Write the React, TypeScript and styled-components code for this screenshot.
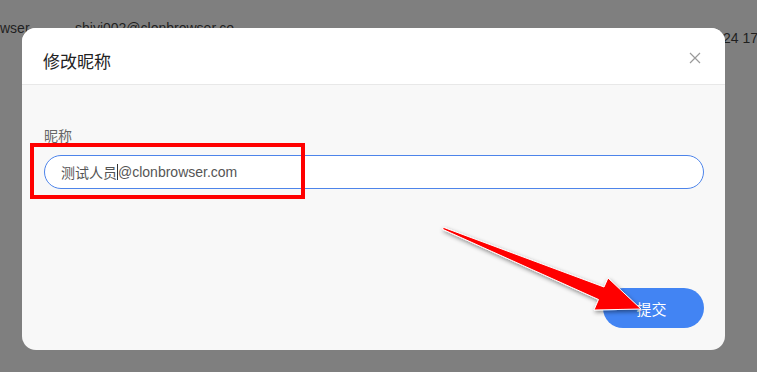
import React from "react";
import styled, { createGlobalStyle } from "styled-components";

const Global = createGlobalStyle`
  html, body { margin: 0; padding: 0; }
  body {
    width: 757px;
    height: 372px;
    overflow: hidden;
    font-family: "Liberation Sans", "Noto Sans CJK SC", sans-serif;
  }
`;

const Page = styled.div`
  position: relative;
  width: 757px;
  height: 372px;
  background: #7f7f7f;
  overflow: hidden;
`;

const TableRow = styled.div`
  display: flex;
  align-items: flex-start;
  padding-top: 20px;
  font-size: 14px;
  line-height: 16px;
  color: #1f1f1f;
`;

const Cell = styled.span<{ $w: number; $drop?: number }>`
  width: ${(p) => p.$w}px;
  flex: none;
  white-space: nowrap;
  margin-top: ${(p) => p.$drop ?? 0}px;
`;

const Modal = styled.div`
  position: absolute;
  left: 22px;
  top: 28px;
  width: 703px;
  height: 322px;
  border-radius: 14px;
  overflow: hidden;
  background: #f8f8f8;
  display: flex;
  flex-direction: column;
`;

const Header = styled.div`
  height: 57px;
  flex: none;
  background: #fff;
  border-bottom: 1px solid #e8e8e8;
  display: flex;
  align-items: center;
  justify-content: space-between;
  padding: 6px 24px 0 21px;
  box-sizing: border-box;
`;

const Title = styled.div`
  font-size: 17px;
  color: #222;
  padding-top: 2px;
`;

const Close = styled.div`
  width: 12px;
  height: 12px;
  display: flex;
  align-items: center;
  justify-content: center;
  margin-top: -2px;
`;

const Body = styled.div`
  flex: 1;
  padding: 43px 21px 22px 22px;
  display: flex;
  flex-direction: column;
`;

const Label = styled.div`
  font-size: 14px;
  color: #666;
  line-height: 16px;
`;

const Input = styled.div`
  margin-top: 11px;
  height: 34px;
  box-sizing: border-box;
  border: 1px solid #4d84ea;
  border-radius: 17px;
  background: #fff;
  display: flex;
  align-items: center;
  padding-left: 16px;
  font-size: 14px;
  color: #555;
`;

const Caret = styled.span`
  display: inline-block;
  width: 1px;
  height: 16px;
  background: #333;
`;

const Footer = styled.div`
  margin-top: auto;
  display: flex;
  justify-content: flex-end;
`;

const Submit = styled.button`
  width: 101px;
  height: 40px;
  border: none;
  border-radius: 20px;
  background: #4284f3;
  color: #fff;
  font-size: 15px;
  font-family: "Noto Sans CJK SC", sans-serif;
  cursor: pointer;
  padding-left: 2px;
`;

const Highlight = styled.div`
  position: absolute;
  left: 30px;
  top: 143px;
  width: 275px;
  height: 56px;
  box-sizing: border-box;
  border: 4px solid #ff0000;
`;

const ArrowLayer = styled.svg`
  position: absolute;
  left: 0;
  top: 0;
  pointer-events: none;
`;

export default function App() {
  return (
    <Page>
      <Global />
      <TableRow>
        <Cell $w={75}>wser</Cell>
        <Cell $w={648}>shiyi002@clonbrowser.co</Cell>
        <Cell $w={34} $drop={10}>24 17</Cell>
      </TableRow>
      <Modal>
        <Header>
          <Title>修改昵称</Title>
          <Close>
            <svg width="12" height="12" viewBox="0 0 12 12">
              <path d="M1 1 L11 11 M11 1 L1 11" stroke="#9a9a9a" strokeWidth="1.2" />
            </svg>
          </Close>
        </Header>
        <Body>
          <Label>昵称</Label>
          <Input>
            测试人员
            <Caret />
            @clonbrowser.com
          </Input>
          <Footer>
            <Submit>提交</Submit>
          </Footer>
        </Body>
      </Modal>
      <Highlight />
      <ArrowLayer width="757" height="372" viewBox="0 0 757 372">
        <defs>
          <filter id="sh" x="-20%" y="-20%" width="140%" height="140%">
            <feDropShadow dx="1" dy="2" stdDeviation="2" floodColor="#000" floodOpacity="0.45" />
          </filter>
        </defs>
        <polygon
          points="442,229 444,227.5 604,287 608,278 641,309 594,310 598.5,299.5"
          fill="#ff0000"
          stroke="#fff"
          strokeWidth="1"
          strokeLinejoin="round"
          filter="url(#sh)"
        />
      </ArrowLayer>
    </Page>
  );
}
